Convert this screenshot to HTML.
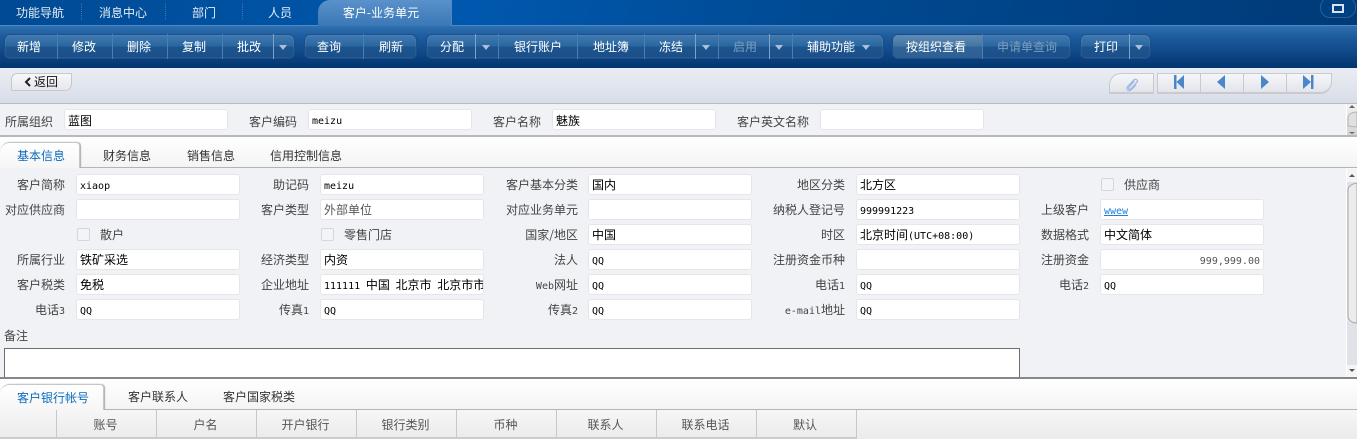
<!DOCTYPE html>
<html lang="zh"><head><meta charset="utf-8"><title>客户-业务单元</title>
<style>
html,body{margin:0;padding:0;width:1357px;height:445px;overflow:hidden;background:#fff}
body{position:relative;font:12px/14px "WenQuanYi Zen Hei","Noto Sans CJK SC","Liberation Sans",sans-serif;color:#444}
div,span,svg{position:absolute;box-sizing:border-box}
span{white-space:nowrap}
b,i{font-weight:normal;font-style:normal}
i{font:10px "DejaVu Sans Mono","Liberation Mono",monospace}
.nav{left:0;top:0;width:1357px;height:26px;background:linear-gradient(100deg,#004a94 0,#0058ae 35%,#004a92 60%,#003a78 100%);border-bottom:1px solid #4f88c4}
.navt{top:6px;color:#e8eef6;transform:translateX(-50%)}
.sep{top:3px;width:1px;height:17px;border-left:1px dotted #3f74ad}
.act{left:318px;top:0;width:134px;height:26px;border-radius:12px 0 0 0;background:linear-gradient(#5a92ca,#3a78b6);border-right:1px solid #4f88c4}
.bar{left:0;top:26px;width:1357px;height:42px;background:linear-gradient(#2f70b0 0,#1d5c9e 25%,#02356f 100%)}
.grp{top:34px;height:25px;border:1px solid #1c4f8a;border-radius:6px;background:linear-gradient(#4079b2,#2c669f 48%,#1c558f 52%,#1b4f88);box-shadow:inset 0 0 0 1px rgba(255,255,255,.06)}
.dv{top:34px;width:1px;height:25px;background:#4c7eb1}
.dv2{background:#7ba2c8}
.bt{top:40px;color:#fff;transform:translateX(-50%)}
.dis{color:#7e9cbc}
.ar{top:45px;width:0;height:0;border:4.5px solid transparent;border-top:5px solid #a9c0d8;border-bottom:0}
.sub{left:0;top:68px;width:1357px;height:36px;background:linear-gradient(#eaedf3,#d8dde8);border-bottom:1px solid #b9bcc2}
.hdr{left:0;top:104px;width:1357px;height:33px;background:#f0f2f6;border-bottom:2px solid #b6b8bb}
.tabs{left:0;width:1357px;background:linear-gradient(#fff,#f4f4f4);border-bottom:1px solid #b2b4b6}
.form{left:0;top:168px;width:1357px;height:209px;background:#f0f2f6}
.in{height:21px;width:164px;background:#fff;border:1px solid #e4e6ea;border-radius:3px;color:#000;padding:3px 3px;line-height:14px;white-space:nowrap;overflow:hidden}
.l{color:#444;text-align:right;white-space:nowrap}
.cb{width:13px;height:13px;border:1px solid #d4d6da;border-radius:2px;background:#f2f4f7}
.tab{color:#333}
.on{color:#0b6bbb}
.atab{left:0;background:linear-gradient(#fff,#f6f6f6);border:1px solid #c6c6c6;border-left:0;border-bottom:0;border-radius:10px 4px 0 0;box-shadow:1px 0 1px #aaa}
.gh{left:0;top:410px;width:1357px;height:29px;background:linear-gradient(#f6f6f6,#ebebeb)}
.gc{top:410px;width:101px;height:29px;border-left:1px solid #c8c8c8;border-bottom:2px solid #ccc;text-align:center;line-height:29px;color:#555;padding-right:3px}
.sb{left:1346px;width:11px;background:#dfe2e6;border-left:1px solid #fff}
.nb{top:73px;height:21px;background:linear-gradient(#f5f6f9,#e3e5eb);border:1px solid #c8cacd;border-bottom-width:2px}
</style></head><body>

<div class="nav"></div>
<div class="act"></div>
<span class="navt" style="left:40px">功能导航</span><div class="sep" style="left:81px"></div>
<span class="navt" style="left:123px">消息中心</span><div class="sep" style="left:165px"></div>
<span class="navt" style="left:204px">部门</span><div class="sep" style="left:242px"></div>
<span class="navt" style="left:280px">人员</span>
<span class="navt" style="left:381px;color:#fff">客户-业务单元</span>
<div style="left:1320px;top:-3px;width:36px;height:21px;border:1px solid #2a5f9a;border-radius:10px;background:#003f80"></div>
<div style="left:1332px;top:4px;width:12px;height:9px;border:2px solid #d8e2ee;border-width:2px 2px"></div>

<div class="bar"></div>
<div class="grp" style="left:4px;width:291px"></div>
<div class="dv" style="left:57px"></div><div class="dv" style="left:112px"></div><div class="dv" style="left:167px"></div><div class="dv" style="left:222px"></div><div class="dv dv2" style="left:273px"></div>
<span class="bt" style="left:29px">新增</span><span class="bt" style="left:84px">修改</span><span class="bt" style="left:139px">删除</span><span class="bt" style="left:194px">复制</span><span class="bt" style="left:249px">批改</span><div class="ar" style="left:279px"></div>
<div class="grp" style="left:304px;width:113px"></div><div class="dv" style="left:363px"></div>
<span class="bt" style="left:329px">查询</span><span class="bt" style="left:391px">刷新</span>
<div class="grp" style="left:426px;width:458px"></div>
<div class="dv dv2" style="left:475px"></div><div class="dv" style="left:498px"></div><div class="dv" style="left:577px"></div><div class="dv" style="left:644px"></div><div class="dv dv2" style="left:695px"></div><div class="dv" style="left:718px"></div><div class="dv dv2" style="left:769px"></div><div class="dv" style="left:792px"></div>
<span class="bt" style="left:452px">分配</span><div class="ar" style="left:482px"></div>
<span class="bt" style="left:538px">银行账户</span><span class="bt" style="left:611px">地址簿</span><span class="bt" style="left:671px">冻结</span><div class="ar" style="left:702px"></div>
<span class="bt dis" style="left:745px">启用</span><div class="ar" style="left:775px"></div>
<span class="bt" style="left:831px">辅助功能</span><div class="ar" style="left:862px"></div>
<div class="grp" style="left:892px;width:179px"></div>
<div style="left:893px;top:35px;width:89px;height:23px;border-radius:5px 0 0 5px;background:linear-gradient(#5f8ab5,#44759f 48%,#2f6398 52%,#2f6093)"></div>
<div class="dv" style="left:982px"></div>
<span class="bt" style="left:936px">按组织查看</span><span class="bt dis" style="left:1027px">申请单查询</span>
<div class="grp" style="left:1080px;width:71px"></div><div class="dv dv2" style="left:1129px"></div>
<span class="bt" style="left:1106px">打印</span><div class="ar" style="left:1135px"></div>

<div class="sub"></div>
<div style="left:11px;top:73px;width:61px;height:18px;background:linear-gradient(#f7f8fa,#e6e8ed);border:1px solid #c6c8cc;border-radius:6px 1px 7px 1px"></div>
<svg style="left:24px;top:77px" width="8" height="10" viewBox="0 0 8 10"><path d="M6 1 2 5l4 4" fill="none" stroke="#222" stroke-width="2"/></svg>
<span style="left:34px;top:75px;color:#111">返回</span>

<div class="nb" style="left:1109px;width:45px;border-radius:12px 0 0 0"></div>
<svg style="left:1125px;top:78px" width="14" height="14" viewBox="0 0 14 14"><path d="M9.500 3 4 9.200c-1 1.400.7 2.800 1.900 1.700l6-6.600c1.500-2-1-4-2.900-2.400L2.600 8.600c-1.900 2.400 1 5.400 3.600 3.200L11 7" fill="none" stroke="#9dbce0" stroke-width="1.300"/></svg>
<div class="nb" style="left:1157px;width:175px;border-radius:0 0 12px 0"></div>
<div style="left:1200px;top:73px;width:1px;height:20px;background:#c8cacd"></div>
<div style="left:1243px;top:73px;width:1px;height:20px;background:#c8cacd"></div>
<div style="left:1286px;top:73px;width:1px;height:20px;background:#c8cacd"></div>
<svg style="left:1170px;top:75px" width="150" height="15" viewBox="0 0 150 15" fill="#4a86c8"><path d="M4 0h2.500v14H4zM6.500 7 14 0v14zM47 7l8-7v14zM91 0l8 7-8 7zM133 0l8 7-8 7zM141 0h2.500v14H141z"/></svg>

<div class="hdr"></div>
<span class="l" style="left:5px;top:115px">所属组织</span>
<div class="in" style="left:64px;top:109px;padding-top:4px">蓝图</div>
<span class="l" style="left:249px;top:115px">客户编码</span>
<div class="in" style="left:308px;top:109px"><i>meizu</i></div>
<span class="l" style="left:493px;top:115px">客户名称</span>
<div class="in" style="left:552px;top:109px;padding-top:4px">魅族</div>
<span class="l" style="left:737px;top:115px">客户英文名称</span>
<div class="in" style="left:820px;top:109px"></div>
<div class="sb" style="top:104px;height:31px;background:linear-gradient(#f2f2f2,#d4d4d4)"></div>
<svg style="left:1347px;top:104px" width="10" height="31" viewBox="0 0 10 31"><path d="M2 4 5 1l3 3zM2 28h6l-3 2z" fill="#666"/><path d="M1 22V14c0-3 3-6 9-6v15z" fill="#e0e0e0" stroke="#b5b5b5"/></svg>

<div class="tabs" style="top:137px;height:31px"></div>
<div class="atab" style="top:142px;width:80px;height:26px"></div>
<span class="on" style="left:17px;top:149px">基本信息</span>
<span class="tab" style="left:103px;top:149px">财务信息</span>
<span class="tab" style="left:187px;top:149px">销售信息</span>
<span class="tab" style="left:270px;top:149px">信用控制信息</span>

<div class="form"></div>

<!-- col 1 -->
<span class="l" style="right:1292px;top:178px">客户简称</span><div class="in" style="left:76px;top:174px"><i>xiaop</i></div>
<span class="l" style="right:1292px;top:203px">对应供应商</span><div class="in" style="left:76px;top:199px"></div>
<div class="cb" style="left:77px;top:228px"></div><span style="left:100px;top:228px">散户</span>
<span class="l" style="right:1292px;top:253px">所属行业</span><div class="in" style="left:76px;top:249px">铁矿采选</div>
<span class="l" style="right:1292px;top:278px">客户税类</span><div class="in" style="left:76px;top:274px">免税</div>
<span class="l" style="right:1292px;top:303px">电话<i>3</i></span><div class="in" style="left:76px;top:299px"><i>QQ</i></div>

<!-- col 2 -->
<span class="l" style="right:1048px;top:178px">助记码</span><div class="in" style="left:320px;top:174px"><i>meizu</i></div>
<span class="l" style="right:1048px;top:203px">客户类型</span><div class="in" style="left:320px;top:199px;color:#555">外部单位</div>
<div class="cb" style="left:321px;top:228px"></div><span style="left:344px;top:228px">零售门店</span>
<span class="l" style="right:1048px;top:253px">经济类型</span><div class="in" style="left:320px;top:249px">内资</div>
<span class="l" style="right:1048px;top:278px">企业地址</span><div class="in" style="left:320px;top:274px;word-spacing:3px"><i>111111</i> 中国 北京市 北京市市</div>
<span class="l" style="right:1048px;top:303px">传真<i>1</i></span><div class="in" style="left:320px;top:299px"><i>QQ</i></div>

<!-- col 3 -->
<span class="l" style="right:779px;top:178px">客户基本分类</span><div class="in" style="left:588px;top:174px">国内</div>
<span class="l" style="right:779px;top:203px">对应业务单元</span><div class="in" style="left:588px;top:199px"></div>
<span class="l" style="right:779px;top:228px">国家/地区</span><div class="in" style="left:588px;top:224px">中国</div>
<span class="l" style="right:779px;top:253px">法人</span><div class="in" style="left:588px;top:249px"><i>QQ</i></div>
<span class="l" style="right:779px;top:278px"><i>Web</i>网址</span><div class="in" style="left:588px;top:274px"><i>QQ</i></div>
<span class="l" style="right:779px;top:303px">传真<i>2</i></span><div class="in" style="left:588px;top:299px"><i>QQ</i></div>

<!-- col 4 -->
<span class="l" style="right:512px;top:178px">地区分类</span><div class="in" style="left:856px;top:174px">北方区</div>
<span class="l" style="right:512px;top:203px">纳税人登记号</span><div class="in" style="left:856px;top:199px"><i>999991223</i></div>
<span class="l" style="right:512px;top:228px">时区</span><div class="in" style="left:856px;top:224px">北京时间<i>(UTC+08:00)</i></div>
<span class="l" style="right:512px;top:253px">注册资金币种</span><div class="in" style="left:856px;top:249px"></div>
<span class="l" style="right:512px;top:278px">电话<i>1</i></span><div class="in" style="left:856px;top:274px"><i>QQ</i></div>
<span class="l" style="right:512px;top:303px"><i>e-mail</i>地址</span><div class="in" style="left:856px;top:299px"><i>QQ</i></div>

<!-- col 5 -->
<div class="cb" style="left:1101px;top:178px"></div><span style="left:1124px;top:178px">供应商</span>
<span class="l" style="right:268px;top:203px">上级客户</span><div class="in" style="left:1100px;top:199px"><i style="color:#1f7ee0;text-decoration:underline">wwew</i></div>
<span class="l" style="right:268px;top:228px">数据格式</span><div class="in" style="left:1100px;top:224px">中文简体</div>
<span class="l" style="right:268px;top:253px">注册资金</span><div class="in" style="left:1100px;top:249px;text-align:right;color:#555"><i>999,999.00</i></div>
<span class="l" style="right:268px;top:278px">电话<i>2</i></span><div class="in" style="left:1100px;top:274px"><i>QQ</i></div>

<span style="left:4px;top:329px">备注</span>
<div style="left:4px;top:348px;width:1016px;height:29px;background:#fff;border:1px solid #6e6e6e;border-bottom:0"></div>

<div class="sb" style="top:168px;height:209px"></div>
<svg style="left:1347px;top:168px" width="10" height="209" viewBox="0 0 10 209"><rect x="0" y="0" width="10" height="14" fill="#f5f5f5"/><path d="M2 9l3-3 3 3z" fill="#555"/><path d="M1 148V22c0-3 3-6 9-7v140c-5 0-9-3-9-7z" fill="#ececec" stroke="#a8a8a8"/><rect x="0" y="197" width="10" height="12" fill="#f5f5f5"/><path d="M2 201h6l-3 3z" fill="#555"/></svg>

<div style="left:0;top:377px;width:1357px;height:2px;background:#84888c"></div>
<div class="tabs" style="top:379px;height:31px"></div>
<div class="atab" style="top:384px;width:104px;height:26px"></div>
<span class="on" style="left:17px;top:391px">客户银行帐号</span>
<span class="tab" style="left:128px;top:390px">客户联系人</span>
<span class="tab" style="left:223px;top:390px">客户国家税类</span>

<div class="gh"></div>
<div class="gc" style="left:0;width:56px;border-left:0"></div>
<div class="gc" style="left:56px">账号</div>
<div class="gc" style="left:156px">户名</div>
<div class="gc" style="left:256px">开户银行</div>
<div class="gc" style="left:356px">银行类别</div>
<div class="gc" style="left:456px">币种</div>
<div class="gc" style="left:556px">联系人</div>
<div class="gc" style="left:656px">联系电话</div>
<div class="gc" style="left:756px;width:101px;border-right:1px solid #c8c8c8">默认</div>
</body></html>
